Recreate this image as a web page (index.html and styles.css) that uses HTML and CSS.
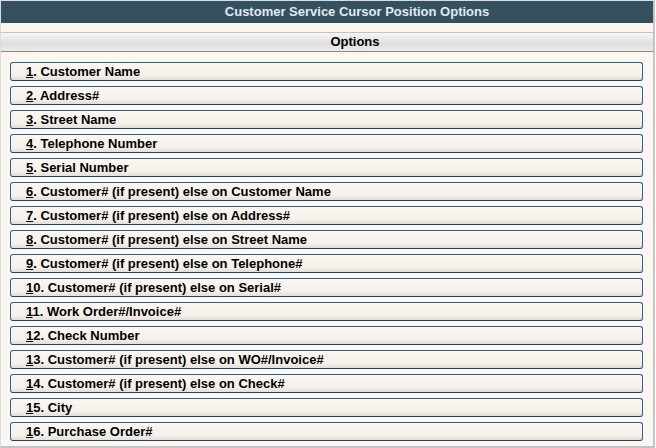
FILE: index.html
```html
<!DOCTYPE html>
<html lang="en">
<head>
    <meta charset="UTF-8">
    <title>Customer Service Cursor Position Options</title>
    <link rel="stylesheet" href="styles.css">
</head>
<body>
    <div class="panel">
        <div class="title">Customer Service Cursor Position Options</div>
        <div class="options-head">Options</div>
        <div class="option-list">
            <button class="option"><u>1</u>. Customer Name</button>
            <button class="option"><u>2</u>. Address#</button>
            <button class="option"><u>3</u>. Street Name</button>
            <button class="option"><u>4</u>. Telephone Number</button>
            <button class="option"><u>5</u>. Serial Number</button>
            <button class="option"><u>6</u>. Customer# (if present) else on Customer Name</button>
            <button class="option"><u>7</u>. Customer# (if present) else on Address#</button>
            <button class="option"><u>8</u>. Customer# (if present) else on Street Name</button>
            <button class="option"><u>9</u>. Customer# (if present) else on Telephone#</button>
            <button class="option"><u>1</u>0. Customer# (if present) else on Serial#</button>
            <button class="option"><u>1</u>1. Work Order#/Invoice#</button>
            <button class="option"><u>1</u>2. Check Number</button>
            <button class="option"><u>1</u>3. Customer# (if present) else on WO#/Invoice#</button>
            <button class="option"><u>1</u>4. Customer# (if present) else on Check#</button>
            <button class="option"><u>1</u>5. City</button>
            <button class="option"><u>1</u>6. Purchase Order#</button>
        </div>
    </div>
</body>
</html>
```

FILE: styles.css
```css
body {
    margin: 0;
    font-family: "Liberation Sans", Arial, sans-serif;
    background-color: #fff;
}
.panel {
    width: 652px;
    height: 445px;
    background-color: #fbf6f0;
    border-top: 1px solid #dcdcdc;
    border-left: 1px solid #dcdcdc;
    border-right: 2px solid #c4c4c4;
    border-bottom: 2px solid #c4c4c4;
}
.title {
    height: 22px;
    line-height: 22px;
    background-color: #35515f;
    color: #e2eaef;
    font-size: 13px;
    font-weight: bold;
    text-align: center;
    padding-left: 60px;
    margin-bottom: 9px;
}
.options-head {
    height: 18px;
    line-height: 18px;
    border-top: 1px solid #c9c2ba;
    border-bottom: 1px solid #8a8a8a;
    background: linear-gradient(#f6f6f6, #dedede 60%, #ebebeb);
    color: #000;
    font-size: 13px;
    font-weight: bold;
    text-align: center;
    padding-left: 56px;
}
.option-list {
    display: flex;
    flex-direction: column;
    gap: 5px;
    padding: 10px 10px 0 9px;
}
.option {
    height: 19px;
    padding: 0 0 0 15px;
    text-align: left;
    font-family: "Liberation Sans", Arial, sans-serif;
    font-size: 13px;
    font-weight: bold;
    color: #000;
    background: linear-gradient(#fbf7f1, #f6f2ea 70%, #e4ded4);
    border: 1px solid #2d5f99;
    border-bottom-color: #1c4478;
    border-radius: 3px;
}
```
